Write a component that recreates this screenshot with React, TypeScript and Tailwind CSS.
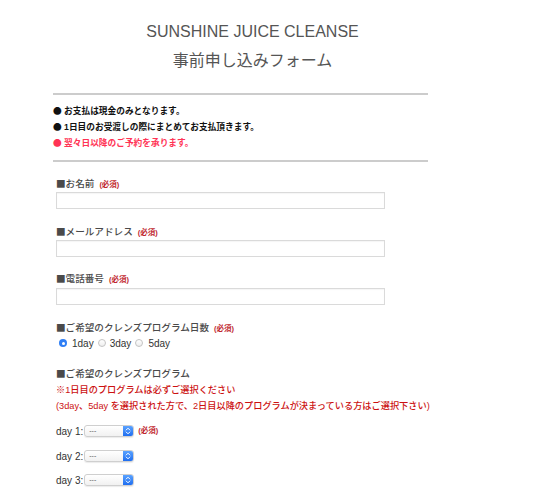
import React from 'react';

const Req = () => (
  <span className="ml-[5px] text-[7.5px] font-bold text-[#c0262d]">(必須)</span>
);

const Glyph = ({ c }: { c: string }) => (
  <span className="font-['Noto_Sans_CJK_JP',sans-serif]">{c}</span>
);

const Label = ({ text, req, className }: { text: string; req?: boolean; className: string }) => (
  <div className={`h-[14px] leading-[14px] text-[9.6px] font-medium text-[#4a4a4a] ${className}`}>
    <span>
      <Glyph c="■" />
      {text}
    </span>
    {req && <Req />}
  </div>
);

const TextInput = ({ className }: { className: string }) => (
  <div className={`h-[17px] w-[329px] border border-[#dadada] bg-white shadow-[inset_0_1px_1px_rgba(0,0,0,0.04)] ${className}`} />
);

const Radio = ({ checked }: { checked?: boolean }) =>
  checked ? (
    <span className="flex h-[8px] w-[8px] items-center justify-center rounded-full bg-[#2f7ff5]">
      <span className="h-[3px] w-[3px] rounded-full bg-white" />
    </span>
  ) : (
    <span className="h-[8px] w-[8px] rounded-full border border-[#c4c4c4] bg-gradient-to-b from-white to-[#eeeeee]" />
  );

const FakeSelect = () => (
  <div className="flex h-[12px] w-[50px] items-stretch rounded-[3px] border border-[#cfcfcf] bg-gradient-to-b from-white to-[#f1f1f1] shadow-[0_1px_1px_rgba(0,0,0,0.08)]">
    <span className="flex-1 pl-[4px] text-[7px] leading-[10px] text-[#555]">---</span>
    <span className="flex w-[10px] items-center justify-center rounded-r-[2px] bg-gradient-to-b from-[#5aa2ff] to-[#1f6ef0]">
      <svg width="6" height="8" viewBox="0 0 6 8" fill="none" stroke="white" strokeWidth="1" strokeLinecap="round" strokeLinejoin="round">
        <path d="M1.2 3 L3 1.2 L4.8 3" />
        <path d="M1.2 5 L3 6.8 L4.8 5" />
      </svg>
    </span>
  </div>
);

const DayRow = ({ n, req, className }: { n: number; req?: boolean; className: string }) => (
  <div className={`flex h-[14px] items-center ${className}`}>
    <span className="mr-[1px] text-[10px] text-[#333]">day {n}:</span>
    <FakeSelect />
    {req && <span className="ml-[4px] text-[7.5px] font-bold text-[#c0262d]">(必須)</span>}
  </div>
);

export default function App() {
  return (
    <div className="h-[494px] w-[550px] overflow-hidden bg-white font-['Liberation_Sans','Noto_Sans_CJK_JP',sans-serif]">
      <div className="w-[505px] pt-[22px] text-center text-[16px] text-[#555]">
        <div className="leading-[20px]">SUNSHINE JUICE CLEANSE</div>
        <div className="mt-[9px] leading-[20px]">事前申し込みフォーム</div>
      </div>

      <div className="ml-[53px] w-[375px]">
        <div className="mt-[22px] h-[2px] bg-[#cccccc]" />

        <ul className="mt-[8px] text-[8.7px] font-bold leading-[16px]">
          <li className="text-[#111]">
            <Glyph c="●" /> お支払は現金のみとなります。
          </li>
          <li className="text-[#111]">
            <Glyph c="●" /> 1日目のお受渡しの際にまとめてお支払頂きます。
          </li>
          <li className="text-[#ff3355]">
            <Glyph c="●" /> 翌々日以降のご予約を承ります。
          </li>
        </ul>

        <div className="mt-[9px] h-[2px] bg-[#cccccc]" />

        <form className="pl-[3px]">
          <Label text="お名前" req className="mt-[14px]" />
          <TextInput className="mt-[2px]" />

          <Label text="メールアドレス" req className="mt-[15px]" />
          <TextInput className="mt-[2px]" />

          <Label text="電話番号" req className="mt-[14px]" />
          <TextInput className="mt-[3px]" />

          <Label text="ご希望のクレンズプログラム日数" req className="mt-[15px]" />
          <div className="mt-[2px] flex h-[14px] items-center pl-[3px] text-[10px] text-[#333]">
            <Radio checked />
            <span className="ml-[5px] mr-[4px]">1day</span>
            <Radio />
            <span className="ml-[4px] mr-[4px]">3day</span>
            <Radio />
            <span className="ml-[5px]">5day</span>
          </div>

          <Label text="ご希望のクレンズプログラム" className="mt-[16px]" />
          <div className="mt-[2px] whitespace-nowrap text-[9.2px] font-medium leading-[16px] text-[#cc1111]">
            <div>※1日目のプログラムは必ずご選択ください</div>
            <div>(3day、5day を選択された方で、2日目以降のプログラムが決まっている方はご選択下さい)</div>
          </div>

          <DayRow n={1} req className="mt-[10px]" />
          <DayRow n={2} className="mt-[11px]" />
          <DayRow n={3} className="mt-[10px]" />
        </form>
      </div>
    </div>
  );
}
